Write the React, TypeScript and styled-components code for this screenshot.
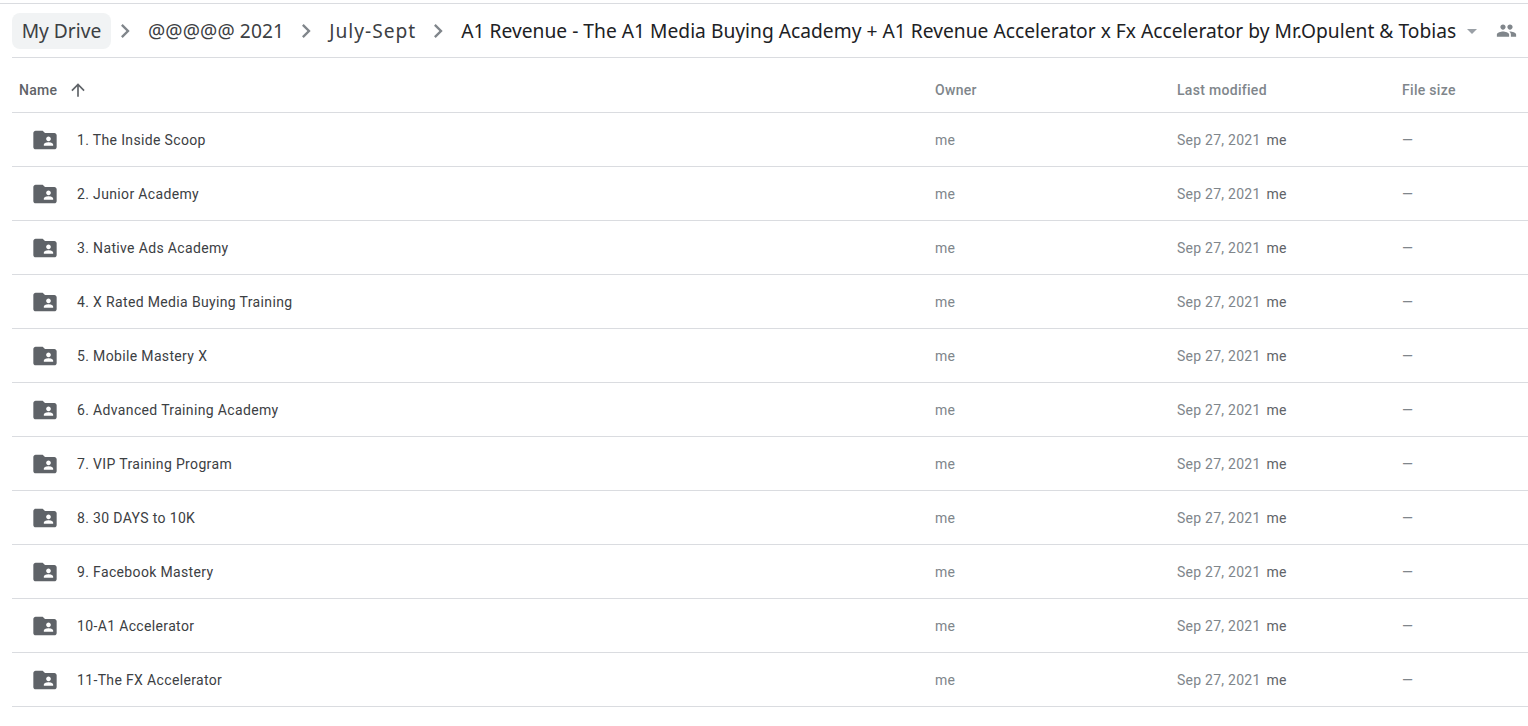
import React, { FC } from "react";
import styled, { createGlobalStyle } from "styled-components";

const colors = {
  line: "#dadce0",
  title: "#3c4043",
  muted: "#80868b",
  head: "#5f6368",
  icon: "#5f6368",
  chip: "#f1f3f4",
};

const GlobalStyle = createGlobalStyle`
  html, body {
    margin: 0;
    padding: 0;
    height: 100%;
    background: #fff;
    overflow: hidden;
  }
  body {
    font-family: Roboto, "Liberation Sans", sans-serif;
  }
`;

const Page = styled.div`
  width: 1528px;
  height: 726px;
  padding-top: 3px;
  box-sizing: border-box;
`;

const TopRule = styled.div`
  height: 1px;
  background: ${colors.line};
`;

const Content = styled.main`
  padding-left: 12px;
`;

const Breadcrumbs = styled.nav`
  display: flex;
  align-items: center;
  height: 53px;
  border-bottom: 1px solid ${colors.line};
  font-family: "Noto Sans", sans-serif;
  font-size: 19.2px;
  color: ${colors.title};
`;

const Crumb = styled.span<{ $spacing?: number }>`
  flex: none;
  padding: 0 8px 0 9px;
  white-space: nowrap;
  letter-spacing: ${(p) => p.$spacing ?? 0}px;
`;

const CurrentCrumb = styled(Crumb)`
  padding-right: 4px;
  color: #202124;
`;

const RootCrumb = styled.span`
  display: flex;
  align-items: center;
  justify-content: center;
  flex: none;
  width: 99px;
  height: 36px;
  border-radius: 8px;
  background: ${colors.chip};
`;

const Chevron = styled.svg`
  flex: none;
  width: 28px;
  height: 28px;
  fill: ${colors.muted};
`;

const Caret = styled.svg`
  flex: none;
  width: 24px;
  height: 24px;
  fill: #9aa0a6;
`;

const PeopleIcon = styled.svg`
  flex: none;
  width: 21px;
  height: 21px;
  margin-left: 12px;
  fill: ${colors.muted};
`;

const Row = styled.div<{ $head?: boolean }>`
  display: grid;
  grid-template-columns: 923px 242px 225px 1fr;
  align-items: center;
  box-sizing: border-box;
  height: ${(p) => (p.$head ? 55 : 54)}px;
  padding-top: ${(p) => (p.$head ? 10 : 0)}px;
  border-bottom: 1px solid ${colors.line};
  font-size: 14px;
  letter-spacing: 0.25px;
`;

const HeadCell = styled.div<{ $strong?: boolean }>`
  display: flex;
  align-items: center;
  font-weight: 500;
  letter-spacing: 0.3px;
  color: ${(p) => (p.$strong ? colors.head : colors.muted)};
`;

const NameHead = styled(HeadCell)`
  padding-left: 7px;
`;

const SortArrow = styled.svg`
  width: 20px;
  height: 20px;
  margin-left: 11px;
  fill: ${colors.head};
`;

const NameCell = styled.div`
  display: flex;
  align-items: center;
  padding-left: 19px;
  letter-spacing: 0.35px;
  color: ${colors.title};
`;

const FolderIcon = styled.svg`
  flex: none;
  width: 28px;
  height: 28px;
  margin-right: 18px;
  fill: ${colors.icon};
`;

const Muted = styled.div`
  color: ${colors.muted};
`;

const Modified = styled(Muted)`
  display: flex;
  gap: 6px;
`;

const ModifiedBy = styled.span`
  color: ${colors.head};
`;

const folders = [
  "1. The Inside Scoop",
  "2. Junior Academy",
  "3. Native Ads Academy",
  "4. X Rated Media Buying Training",
  "5. Mobile Mastery X",
  "6. Advanced Training Academy",
  "7. VIP Training Program",
  "8. 30 DAYS to 10K",
  "9. Facebook Mastery",
  "10-A1 Accelerator",
  "11-The FX Accelerator",
];

const Sep: FC = () => (
  <Chevron viewBox="0 0 24 24">
    <path d="M8.59 16.59 13.17 12 8.59 7.41 10 6l6 6-6 6z" />
  </Chevron>
);

const SharedFolder: FC = () => (
  <FolderIcon viewBox="0 0 24 24">
    <path d="M20 6h-8l-2-2H4c-1.1 0-2 .9-2 2v12c0 1.1.9 2 2 2h16c1.1 0 2-.9 2-2V8c0-1.1-.9-2-2-2zm-5 3c1.1 0 2 .9 2 2s-.9 2-2 2-2-.9-2-2 .9-2 2-2zm4 8h-8v-1c0-1.33 2.67-2 4-2s4 .67 4 2v1z" />
  </FolderIcon>
);

const App: FC = () => (
  <Page>
    <GlobalStyle />
    <TopRule />
    <Content>
      <Breadcrumbs>
        <RootCrumb>My Drive</RootCrumb>
        <Sep />
        <Crumb $spacing={0.1}>@@@@@ 2021</Crumb>
        <Sep />
        <Crumb $spacing={1}>July-Sept</Crumb>
        <Sep />
        <CurrentCrumb $spacing={0.02}>
          A1 Revenue - The A1 Media Buying Academy + A1 Revenue Accelerator x Fx Accelerator by Mr.Opulent &amp; Tobias
        </CurrentCrumb>
        <Caret viewBox="0 0 24 24">
          <path d="M7 10l5 5 5-5z" />
        </Caret>
        <PeopleIcon viewBox="0 0 24 24">
          <path d="M16 11c1.66 0 2.99-1.34 2.99-3S17.66 5 16 5s-3 1.34-3 3 1.34 3 3 3zm-8 0c1.66 0 2.99-1.34 2.99-3S9.66 5 8 5 5 6.34 5 8s1.34 3 3 3zm0 2c-2.33 0-7 1.17-7 3.5V19h14v-2.5C15 14.17 10.33 13 8 13zm8 0c-.29 0-.62.02-.97.05 1.16.84 1.97 1.97 1.97 3.45V19h6v-2.5c0-2.33-4.67-3.5-7-3.5z" />
        </PeopleIcon>
      </Breadcrumbs>
      <Row $head>
        <NameHead $strong>
          Name
          <SortArrow viewBox="0 0 24 24">
            <path d="M4 12l1.41 1.41L11 7.83V20h2V7.83l5.58 5.59L20 12l-8-8-8 8z" />
          </SortArrow>
        </NameHead>
        <HeadCell>Owner</HeadCell>
        <HeadCell>Last modified</HeadCell>
        <HeadCell>File size</HeadCell>
      </Row>
      {folders.map((name) => (
        <Row key={name}>
          <NameCell>
            <SharedFolder />
            {name}
          </NameCell>
          <Muted>me</Muted>
          <Modified>
            Sep 27, 2021
            <ModifiedBy>me</ModifiedBy>
          </Modified>
          <Muted>—</Muted>
        </Row>
      ))}
    </Content>
  </Page>
);

export default App;
